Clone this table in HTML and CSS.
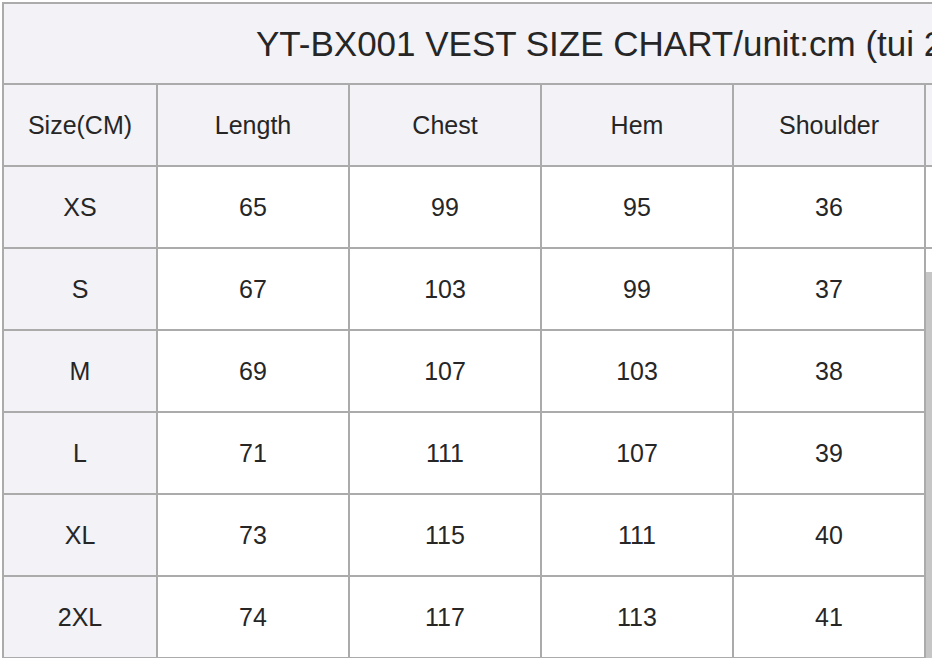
FILE: index.html
```html
<!DOCTYPE html>
<html>
<head>
<meta charset="utf-8">
<link rel="stylesheet" href="styles.css">
</head>
<body>
<div class="viewport">
  <div class="chart">
    <div class="title">YT-BX001 VEST SIZE CHART/unit:cm (tui 2cm)</div>
    <div class="cell head">Size(CM)</div>
    <div class="cell head">Length</div>
    <div class="cell head">Chest</div>
    <div class="cell head">Hem</div>
    <div class="cell head">Shoulder</div>
    <div class="cell head"></div>

    <div class="cell size">XS</div><div class="cell">65</div><div class="cell">99</div><div class="cell">95</div><div class="cell">36</div><div class="cell"></div>
    <div class="cell size">S</div><div class="cell">67</div><div class="cell">103</div><div class="cell">99</div><div class="cell">37</div><div class="cell"></div>
    <div class="cell size">M</div><div class="cell">69</div><div class="cell">107</div><div class="cell">103</div><div class="cell">38</div><div class="cell"></div>
    <div class="cell size">L</div><div class="cell">71</div><div class="cell">111</div><div class="cell">107</div><div class="cell">39</div><div class="cell"></div>
    <div class="cell size">XL</div><div class="cell">73</div><div class="cell">115</div><div class="cell">111</div><div class="cell">40</div><div class="cell"></div>
    <div class="cell size">2XL</div><div class="cell">74</div><div class="cell">117</div><div class="cell">113</div><div class="cell">41</div><div class="cell"></div>
  </div>
  <div class="scrollbar"></div>
</div>
</body>
</html>
```

FILE: styles.css
```css
html, body {
  margin: 0;
  padding: 0;
  background: #ffffff;
}

.viewport {
  position: relative;
  width: 932px;
  height: 658px;
  overflow: hidden;
  padding: 2px 0 0 2px;
  box-sizing: border-box;
}

.chart {
  display: grid;
  grid-template-columns: 152px 190px 190px 190px 190px 190px;
  grid-auto-rows: 80px;
  grid-template-rows: 79px;
  gap: 2px;
  padding: 2px;
  background: #ababab;
  width: max-content;
  font-family: "Liberation Sans", Arial, sans-serif;
  color: #262626;
}

.title {
  grid-column: 1 / -1;
  background: #f2f2f7;
  font-size: 35px;
  display: flex;
  align-items: center;
  padding-left: 252px;
  white-space: nowrap;
}

.cell {
  background: #ffffff;
  font-size: 25px;
  display: flex;
  align-items: center;
  justify-content: center;
}

.cell.head,
.cell.size {
  background: #f2f2f7;
}

.scrollbar {
  position: absolute;
  left: 926px;
  top: 272px;
  width: 6px;
  height: 386px;
  background: #c6c6c6;
}
```
